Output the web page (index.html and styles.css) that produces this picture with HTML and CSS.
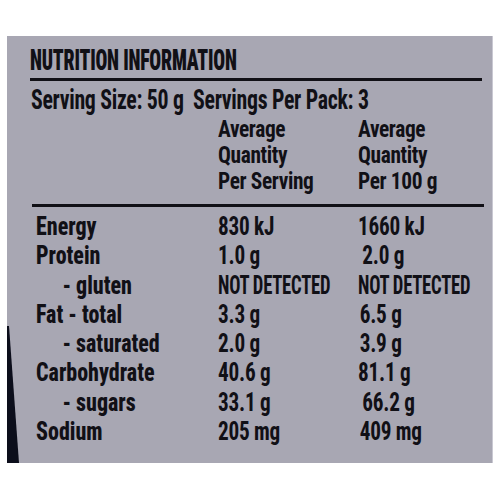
FILE: index.html
```html
<!DOCTYPE html>
<html lang="en">
<head>
    <meta charset="UTF-8">
    <meta name="viewport" content="width=device-width, initial-scale=1.0">
    <title>Nutrition Information</title>
    <link rel="stylesheet" href="styles.css">
</head>
<body>
    <div class="label-panel">
        <div class="edge-shadow"></div>

        <h1 class="label-title"><span>NUTRITION INFORMATION</span></h1>
        <p class="serving">Serving Size: 50 g&nbsp; Servings Per Pack: 3</p>

        <div class="table-head">
            <div></div>
            <div>Average<br>Quantity<br>Per Serving</div>
            <div>Average<br>Quantity<br>Per 100 g</div>
        </div>

        <div class="table-body">
            <div class="name">Energy</div>
            <div class="val">830 kJ</div>
            <div class="val alt">1660 kJ</div>

            <div class="name">Protein</div>
            <div class="val">1.0 g</div>
            <div class="val alt nudge">2.0 g</div>

            <div class="name sub">- gluten</div>
            <div class="val caps">NOT DETECTED</div>
            <div class="val alt caps">NOT DETECTED</div>

            <div class="name">Fat - total</div>
            <div class="val">3.3 g</div>
            <div class="val alt small-nudge">6.5 g</div>

            <div class="name sub">- saturated</div>
            <div class="val">2.0 g</div>
            <div class="val alt small-nudge">3.9 g</div>

            <div class="name">Carbohydrate</div>
            <div class="val">40.6 g</div>
            <div class="val alt">81.1 g</div>

            <div class="name sub">- sugars</div>
            <div class="val">33.1 g</div>
            <div class="val alt nudge">66.2 g</div>

            <div class="name">Sodium</div>
            <div class="val">205 mg</div>
            <div class="val alt small-nudge">409 mg</div>
        </div>
    </div>
</body>
</html>
```
FILE: styles.css
```css
body {
    margin: 0;
    padding: 0;
    background-color: #ffffff;
    font-family: Roboto, "Open Sans", sans-serif;
    font-stretch: 75%;
    color: #111016;
}

.label-panel {
    position: relative;
    margin: 36px 7px 0 7px;
    height: 427px;
    box-sizing: border-box;
    padding: 8px 10px 0 23px;
    background-color: #a8a7b3;
    border-right: 1px solid #c9c8d2;
    overflow: hidden;
}

/* dark wedge of the box side showing at bottom left */
.edge-shadow {
    position: absolute;
    left: 0;
    top: 290px;
    width: 14px;
    height: 137px;
    background-color: #0c0e1b;
    clip-path: polygon(0 0, 2px 0, 12px 100%, 0 100%);
}

/* the print face is far narrower than any installed font, so text is squeezed */
.label-title {
    margin: 0;
    padding-bottom: 2px;
    font-size: 29.5px;
    line-height: 32px;
    font-weight: 900;
    letter-spacing: -0.3px;
    white-space: nowrap;
    border-bottom: 3px solid #111016;
}

.label-title span {
    display: inline-block;
    transform: scaleX(0.665);
    transform-origin: left center;
}

.serving {
    margin: 3px 0 0 1px;
    font-size: 27px;
    line-height: 32px;
    font-weight: 700;
    letter-spacing: -0.4px;
    white-space: nowrap;
    transform: scaleX(0.81);
    transform-origin: left center;
}

.table-head,
.table-body {
    display: grid;
    grid-template-columns: 182px 140px 1fr;
}

.table-head {
    margin: 1px -2px 0 2px;
    padding: 0 0 9px 4px;
    font-size: 23px;
    line-height: 26px;
    font-weight: 700;
    letter-spacing: -0.4px;
    border-bottom: 3px solid #111016;
}

.table-head div {
    transform: scaleX(0.93);
    transform-origin: left center;
}

.table-body {
    margin-top: 5px;
    padding-left: 6px;
    font-size: 25px;
    line-height: 29.3px;
    white-space: nowrap;
}

.name {
    font-weight: 850;
    transform: scaleX(0.88);
    transform-origin: left center;
}

.name.sub {
    padding-left: 30px;
}

.val {
    font-weight: 750;
    letter-spacing: -0.3px;
    transform: scaleX(0.85);
    transform-origin: left center;
}

.val.caps {
    transform: scaleX(0.745);
}

.val.nudge {
    padding-left: 5px;
}

.val.small-nudge {
    padding-left: 2px;
}
```
